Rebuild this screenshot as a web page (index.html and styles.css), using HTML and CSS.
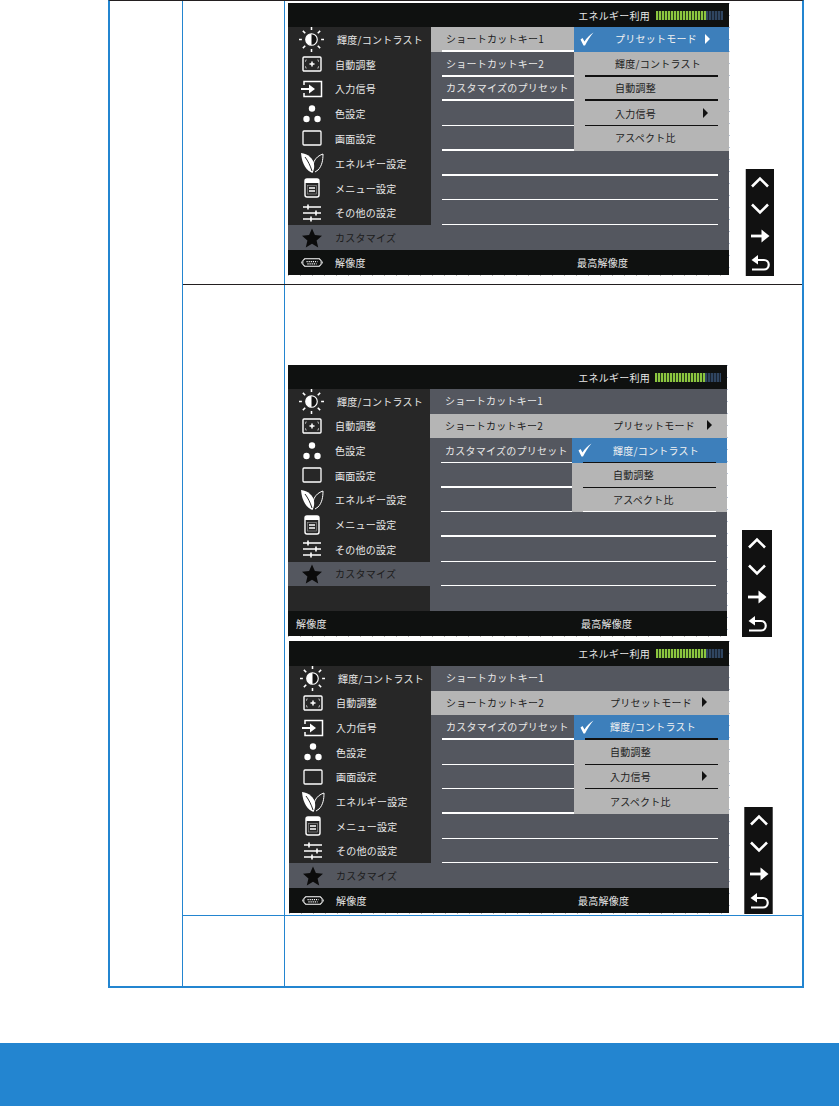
FILE: index.html
```html
<!DOCTYPE html>
<html lang="ja">
<head>
  <meta charset="UTF-8">
  <meta name="viewport" content="width=device-width, initial-scale=1.0">
  <title>カスタマイズ</title>
  <link rel="stylesheet" href="styles.css">
</head>
<body>
  <!-- shared icons -->
  <svg class="icon-defs" xmlns="http://www.w3.org/2000/svg">
    <symbol id="i-sun" viewBox="0 0 26 26">
      <circle cx="13" cy="13" r="6" fill="#111" stroke="#fff" stroke-width="1.2"/>
      <path d="M13 7a6 6 0 0 0 0 12z" fill="#fff"/>
      <path d="M13 0v3M13 23v3M0 13h3M23 13h3M4 4l2.5 2.5M22 4l-2.5 2.5M4 22l2.5-2.5M22 22l-2.5-2.5" stroke="#fff" stroke-width="1.6" fill="none"/>
    </symbol>
    <symbol id="i-auto" viewBox="0 0 24 24">
      <rect x="3" y="5" width="18" height="14" fill="none" stroke="#fff" stroke-width="1.4" rx="1"/>
      <path d="M7 8h-1.500v2M17 8h1.500v2M7 16h-1.500v-2M17 16h1.500v-2" fill="none" stroke="#aaa" stroke-width=".8"/>
      <path d="M12 9.500v5M9.500 12h5" stroke="#fff" stroke-width="1.500"/>
    </symbol>
    <symbol id="i-input" viewBox="0 0 24 24">
      <path d="M4 8V4.500h17.500v15H4V16" fill="none" stroke="#fff" stroke-width="1.500"/>
      <path d="M1 12h9" stroke="#fff" stroke-width="2"/>
      <path d="M9 7.500l6 4.500-6 4.500z" fill="#fff"/>
    </symbol>
    <symbol id="i-color" viewBox="0 0 24 24">
      <circle cx="12" cy="6.500" r="3.200" fill="#fff"/>
      <circle cx="6.500" cy="17" r="3.200" fill="#fff"/>
      <circle cx="17.500" cy="17" r="3.200" fill="#fff"/>
    </symbol>
    <symbol id="i-screen" viewBox="0 0 24 24">
      <rect x="3" y="5" width="18" height="14" rx="1" fill="none" stroke="#fff" stroke-width="1.300"/>
    </symbol>
    <symbol id="i-leaf" viewBox="0 0 24 24">
      <path d="M1 2c7 1 12 5 13 11 .5 3 0 6-1.500 9C7 20 2 14 1 2z" fill="#fff"/>
      <path d="M13 14C14 9 17 5 23 3c0 6-1 12-5 16l-3 2" fill="none" stroke="#fff" stroke-width="1"/>
      <path d="M5 6c3 4 5 8 7 14" fill="none" stroke="#272727" stroke-width="1"/>
    </symbol>
    <symbol id="i-menu" viewBox="0 0 24 24">
      <rect x="5" y="3" width="14" height="18" rx="2" fill="#272727" stroke="#fff" stroke-width="1.400"/>
      <path d="M5 5a2 2 0 0 1 2-2h10a2 2 0 0 1 2 2v2H5z" fill="#fff"/>
      <rect x="7.500" y="9.500" width="9" height="8.500" fill="none" stroke="#999" stroke-width=".6"/>
      <path d="M9 12h6M9 15h6" stroke="#fff" stroke-width="1.400"/>
    </symbol>
    <symbol id="i-other" viewBox="0 0 24 24">
      <path d="M3 6h18M3 12h18M3 18h18" stroke="#fff" stroke-width="1.400"/>
      <path d="M8 3.500v5M16 9.500v5M11 15.500v5" stroke="#fff" stroke-width="1.600"/>
    </symbol>
    <symbol id="i-star" viewBox="0 0 24 24">
      <path d="M12 2.500l2.900 6.600 7.100.7-5.400 4.700 1.600 7-6.200-3.700-6.200 3.700 1.600-7L2 9.800l7.100-.7z" fill="#0b0b0b"/>
    </symbol>
    <symbol id="i-vga" viewBox="0 0 24 12">
      <path d="M4 2h16l2 2v4l-2 2H4L2 8V4z" fill="none" stroke="#fff" stroke-width="1.100"/>
      <path d="M0 5v2M24 5v2" stroke="#fff" stroke-width="1.500"/>
      <path d="M6 5h12M7 7.500h10" stroke="#fff" stroke-width="1.200" stroke-dasharray="1.300 1"/>
    </symbol>
    <symbol id="i-check" viewBox="0 0 14 14">
      <path d="M.5 7.500l2-1.500 2 3.500C6.500 6 9.500 3 13.500.5 10 4.500 7.500 8.500 5 13.500H3.500z" fill="#fff"/>
    </symbol>
    <symbol id="i-up" viewBox="0 0 20 20">
      <path d="M2 14.500l8-8 8 8" fill="none" stroke="#fff" stroke-width="2.600"/>
    </symbol>
    <symbol id="i-down" viewBox="0 0 20 20">
      <path d="M2 5.500l8 8 8-8" fill="none" stroke="#fff" stroke-width="2.600"/>
    </symbol>
    <symbol id="i-right" viewBox="0 0 20 20">
      <path d="M1 10h14" stroke="#fff" stroke-width="2.800"/>
      <path d="M11.500 3.500l8 6.500-8 6.500z" fill="#fff"/>
    </symbol>
    <symbol id="i-back" viewBox="0 0 20 20">
      <path d="M3 7h11a4.500 4.500 0 0 1 0 9.500H2" fill="none" stroke="#fff" stroke-width="2.200"/>
      <path d="M8 2L1.500 7 8 11.500z" fill="#fff"/>
    </symbol>
  </svg>

  <div class="spec-table">
    <div class="spec-side"></div>
    <div class="spec-rows">

      <div class="spec-row row-first">
        <div class="spec-label"></div>
        <div class="spec-body">
          <div class="screen screen-a">
            <div class="osd osd-a">
              <div class="osd-top">
                <span class="osd-text">エネルギー利用</span>
                <span class="energy"><i class="energy-on"></i><i class="energy-off"></i></span>
              </div>
              <div class="osd-main">
                <div class="side">
                  <div class="side-item"><span class="side-icon"><svg class="icon-sun"><use href="#i-sun"/></svg></span><span class="side-text first">輝度/コントラスト</span></div>
                  <div class="side-item"><span class="side-icon"><svg><use href="#i-auto"/></svg></span><span class="side-text">自動調整</span></div>
                  <div class="side-item"><span class="side-icon"><svg><use href="#i-input"/></svg></span><span class="side-text">入力信号</span></div>
                  <div class="side-item"><span class="side-icon"><svg><use href="#i-color"/></svg></span><span class="side-text">色設定</span></div>
                  <div class="side-item"><span class="side-icon"><svg><use href="#i-screen"/></svg></span><span class="side-text">画面設定</span></div>
                  <div class="side-item"><span class="side-icon"><svg><use href="#i-leaf"/></svg></span><span class="side-text">エネルギー設定</span></div>
                  <div class="side-item"><span class="side-icon"><svg><use href="#i-menu"/></svg></span><span class="side-text">メニュー設定</span></div>
                  <div class="side-item"><span class="side-icon"><svg><use href="#i-other"/></svg></span><span class="side-text">その他の設定</span></div>
                  <div class="side-item active"><span class="side-icon"><svg><use href="#i-star"/></svg></span><span class="side-text">カスタマイズ</span></div>
                </div>
                <div class="menu">
                  <div class="menu-row">
                    <div class="sub on"><span class="sub-in line thick">ショートカットキー1</span></div>
                    <div class="opt sel"><span class="opt-in"><svg class="check"><use href="#i-check"/></svg>プリセットモード<span class="arrow arrow-sel"></span></span></div>
                  </div>
                  <div class="menu-row">
                    <div class="sub"><span class="sub-in line thick">ショートカットキー2</span></div>
                    <div class="opt grey"><span class="opt-in pad dark thick">輝度/コントラスト</span></div>
                  </div>
                  <div class="menu-row">
                    <div class="sub"><span class="sub-in line thick">カスタマイズのプリセット</span></div>
                    <div class="opt grey"><span class="opt-in pad dark thick">自動調整</span></div>
                  </div>
                  <div class="menu-row">
                    <div class="sub"><span class="sub-in line"></span></div>
                    <div class="opt grey"><span class="opt-in pad dark">入力信号<span class="arrow"></span></span></div>
                  </div>
                  <div class="menu-row">
                    <div class="sub"><span class="sub-in line thick"></span></div>
                    <div class="opt grey"><span class="opt-in pad">アスペクト比</span></div>
                  </div>
                  <div class="menu-row">
                    <div class="sub"><span class="sub-in line thick"></span></div>
                    <div class="opt full"><span class="opt-in line thick"></span></div>
                  </div>
                  <div class="menu-row">
                    <div class="sub"><span class="sub-in line"></span></div>
                    <div class="opt full"><span class="opt-in line"></span></div>
                  </div>
                  <div class="menu-row">
                    <div class="sub"><span class="sub-in line"></span></div>
                    <div class="opt full"><span class="opt-in line"></span></div>
                  </div>
                  <div class="menu-row"></div>
                </div>
              </div>
              <div class="osd-foot">
                <span class="foot-left"><span class="side-icon"><svg class="icon-vga"><use href="#i-vga"/></svg></span>解像度</span>
                <span>最高解像度</span>
              </div>
            </div>
            <div class="nav-keys">
              <svg><use href="#i-up"/></svg>
              <svg><use href="#i-down"/></svg>
              <svg><use href="#i-right"/></svg>
              <svg><use href="#i-back"/></svg>
            </div>
          </div>
        </div>
      </div>

      <div class="spec-row row-second">
        <div class="spec-label"></div>
        <div class="spec-body">
          <div class="screen screen-b">
            <div class="osd osd-b">
              <div class="osd-top">
                <span class="osd-text">エネルギー利用</span>
                <span class="energy"><i class="energy-on"></i><i class="energy-off"></i></span>
              </div>
              <div class="osd-main">
                <div class="side">
                  <div class="side-item"><span class="side-icon"><svg class="icon-sun"><use href="#i-sun"/></svg></span><span class="side-text first">輝度/コントラスト</span></div>
                  <div class="side-item"><span class="side-icon"><svg><use href="#i-auto"/></svg></span><span class="side-text">自動調整</span></div>
                  <div class="side-item"><span class="side-icon"><svg><use href="#i-color"/></svg></span><span class="side-text">色設定</span></div>
                  <div class="side-item"><span class="side-icon"><svg><use href="#i-screen"/></svg></span><span class="side-text">画面設定</span></div>
                  <div class="side-item"><span class="side-icon"><svg><use href="#i-leaf"/></svg></span><span class="side-text">エネルギー設定</span></div>
                  <div class="side-item"><span class="side-icon"><svg><use href="#i-menu"/></svg></span><span class="side-text">メニュー設定</span></div>
                  <div class="side-item"><span class="side-icon"><svg><use href="#i-other"/></svg></span><span class="side-text">その他の設定</span></div>
                  <div class="side-item active"><span class="side-icon"><svg><use href="#i-star"/></svg></span><span class="side-text">カスタマイズ</span></div>
                </div>
                <div class="menu">
                  <div class="menu-row">
                    <div class="sub"><span class="sub-in">ショートカットキー1</span></div>
                    <div class="opt"></div>
                  </div>
                  <div class="menu-row">
                    <div class="sub on"><span class="sub-in">ショートカットキー2</span></div>
                    <div class="opt grey"><span class="opt-in pad">プリセットモード<span class="arrow"></span></span></div>
                  </div>
                  <div class="menu-row">
                    <div class="sub"><span class="sub-in line">カスタマイズのプリセット</span></div>
                    <div class="opt sel"><span class="opt-in dark"><svg class="check"><use href="#i-check"/></svg>輝度/コントラスト</span></div>
                  </div>
                  <div class="menu-row">
                    <div class="sub"><span class="sub-in line thick"></span></div>
                    <div class="opt grey"><span class="opt-in pad dark">自動調整</span></div>
                  </div>
                  <div class="menu-row">
                    <div class="sub"><span class="sub-in line"></span></div>
                    <div class="opt grey"><span class="opt-in pad line">アスペクト比</span></div>
                  </div>
                  <div class="menu-row">
                    <div class="sub"><span class="sub-in line thick"></span></div>
                    <div class="opt full"><span class="opt-in line thick"></span></div>
                  </div>
                  <div class="menu-row">
                    <div class="sub"><span class="sub-in line"></span></div>
                    <div class="opt full"><span class="opt-in line"></span></div>
                  </div>
                  <div class="menu-row">
                    <div class="sub"><span class="sub-in line"></span></div>
                    <div class="opt full"><span class="opt-in line"></span></div>
                  </div>
                  <div class="menu-row"></div>
                </div>
              </div>
              <div class="osd-foot">
                <span class="foot-left">解像度</span>
                <span>最高解像度</span>
              </div>
            </div>
            <div class="nav-keys">
              <svg><use href="#i-up"/></svg>
              <svg><use href="#i-down"/></svg>
              <svg><use href="#i-right"/></svg>
              <svg><use href="#i-back"/></svg>
            </div>
          </div>

          <div class="screen screen-c">
            <div class="osd osd-c">
              <div class="osd-top">
                <span class="osd-text">エネルギー利用</span>
                <span class="energy"><i class="energy-on"></i><i class="energy-off"></i></span>
              </div>
              <div class="osd-main">
                <div class="side">
                  <div class="side-item"><span class="side-icon"><svg class="icon-sun"><use href="#i-sun"/></svg></span><span class="side-text first">輝度/コントラスト</span></div>
                  <div class="side-item"><span class="side-icon"><svg><use href="#i-auto"/></svg></span><span class="side-text">自動調整</span></div>
                  <div class="side-item"><span class="side-icon"><svg><use href="#i-input"/></svg></span><span class="side-text">入力信号</span></div>
                  <div class="side-item"><span class="side-icon"><svg><use href="#i-color"/></svg></span><span class="side-text">色設定</span></div>
                  <div class="side-item"><span class="side-icon"><svg><use href="#i-screen"/></svg></span><span class="side-text">画面設定</span></div>
                  <div class="side-item"><span class="side-icon"><svg><use href="#i-leaf"/></svg></span><span class="side-text">エネルギー設定</span></div>
                  <div class="side-item"><span class="side-icon"><svg><use href="#i-menu"/></svg></span><span class="side-text">メニュー設定</span></div>
                  <div class="side-item"><span class="side-icon"><svg><use href="#i-other"/></svg></span><span class="side-text">その他の設定</span></div>
                  <div class="side-item active"><span class="side-icon"><svg><use href="#i-star"/></svg></span><span class="side-text">カスタマイズ</span></div>
                </div>
                <div class="menu">
                  <div class="menu-row">
                    <div class="sub"><span class="sub-in">ショートカットキー1</span></div>
                    <div class="opt"></div>
                  </div>
                  <div class="menu-row">
                    <div class="sub on"><span class="sub-in">ショートカットキー2</span></div>
                    <div class="opt grey"><span class="opt-in pad">プリセットモード<span class="arrow"></span></span></div>
                  </div>
                  <div class="menu-row">
                    <div class="sub"><span class="sub-in line thick">カスタマイズのプリセット</span></div>
                    <div class="opt sel"><span class="opt-in dark thick"><svg class="check"><use href="#i-check"/></svg>輝度/コントラスト</span></div>
                  </div>
                  <div class="menu-row">
                    <div class="sub"><span class="sub-in line"></span></div>
                    <div class="opt grey"><span class="opt-in pad dark">自動調整</span></div>
                  </div>
                  <div class="menu-row">
                    <div class="sub"><span class="sub-in line"></span></div>
                    <div class="opt grey"><span class="opt-in pad dark">入力信号<span class="arrow"></span></span></div>
                  </div>
                  <div class="menu-row">
                    <div class="sub"><span class="sub-in line thick"></span></div>
                    <div class="opt grey"><span class="opt-in pad">アスペクト比</span></div>
                  </div>
                  <div class="menu-row">
                    <div class="sub"><span class="sub-in line"></span></div>
                    <div class="opt full"><span class="opt-in line"></span></div>
                  </div>
                  <div class="menu-row">
                    <div class="sub"><span class="sub-in line"></span></div>
                    <div class="opt full"><span class="opt-in line"></span></div>
                  </div>
                  <div class="menu-row"></div>
                </div>
              </div>
              <div class="osd-foot">
                <span class="foot-left"><span class="side-icon"><svg class="icon-vga"><use href="#i-vga"/></svg></span>解像度</span>
                <span>最高解像度</span>
              </div>
            </div>
            <div class="nav-keys">
              <svg><use href="#i-up"/></svg>
              <svg><use href="#i-down"/></svg>
              <svg><use href="#i-right"/></svg>
              <svg><use href="#i-back"/></svg>
            </div>
          </div>
        </div>
      </div>

      <div class="spec-row row-third">
        <div class="spec-label"></div>
        <div class="spec-body"></div>
      </div>

    </div>
  </div>

  <div class="page-footer"></div>
</body>
</html>
```

FILE: styles.css
```css
/* General Reset */
* {
  margin: 0;
  padding: 0;
  box-sizing: border-box;
}
body {
  font-family: "Noto Sans CJK JP", "Noto Sans", sans-serif;
  background-color: #fff;
}
.icon-defs {
  display: none;
}

/* Table frame */
.spec-table {
  display: flex;
  width: 696px;
  margin-left: 108px;
  border-top: 1px solid #231f20;
  border-left: 2px solid #2385d0;
  border-right: 2px solid #2385d0;
  border-bottom: 2px solid #2385d0;
}
.spec-side {
  width: 73px;
  border-right: 1px solid #2385d0;
}
.spec-rows {
  flex: 1;
  min-width: 0;
}
.spec-row {
  display: flex;
}
.spec-label {
  width: 102px;
  flex-shrink: 0;
  border-right: 1px solid #2385d0;
}
.spec-body {
  flex: 1;
  min-width: 0;
}
.row-first {
  height: 284px;
  border-bottom: 1px solid #231f20;
}
.row-first .spec-body {
  padding-top: 2px;
}
.row-second {
  height: 631px;
  border-bottom: 1px solid #2385d0;
}
.row-second .spec-body {
  padding-top: 80px;
}
.row-third {
  height: 70px;
}

/* One monitor menu with its keys */
.screen {
  display: flex;
  align-items: flex-end;
  padding-left: 3px;
}
.screen-c {
  margin-top: 5px;
  padding-left: 4px;
}
.osd {
  position: relative;
  display: flex;
  flex-direction: column;
  flex-shrink: 0;
  width: 441px;
  height: 272px;
  background-color: #54575f;
  color: #e8e8e8;
  font-size: 10px;
  letter-spacing: 0.25px;
  --side-w: 143px;
  --sub-w: 143px;
  --top-h: 24px;
  --opt-pad: 30px;
  --arrow-gap: 10px;
}
.osd-b {
  width: 439px;
  height: 271px;
  --side-w: 142px;
  --sub-w: 142px;
  --arrow-gap: 4px;
}
.osd-c {
  width: 440px;
  --side-w: 142px;
  --top-h: 25px;
  --opt-pad: 25px;
  --arrow-gap: 11px;
}
/* the small ticks along the edge of the screen capture */
.osd::before,
.osd::after {
  content: "";
  position: absolute;
}
.osd::before {
  top: 0;
  right: -1px;
  bottom: 0;
  width: 1px;
  background: repeating-linear-gradient(180deg, #b9c3d6 0 1px, transparent 1px 12px);
}
.osd::after {
  left: 0;
  right: 0;
  bottom: -1px;
  height: 1px;
  background: repeating-linear-gradient(90deg, #b9b9b9 0 1px, transparent 1px 12px);
}
.osd-top {
  display: flex;
  align-items: center;
  justify-content: flex-end;
  height: var(--top-h);
  padding-right: 6px;
  background-color: #0f1110;
}
.osd-text {
  margin-right: 6px;
}
.osd-b .osd-text {
  margin-right: 5px;
}
.energy {
  display: flex;
  height: 9px;
}
.energy-on {
  width: 50px;
  background: repeating-linear-gradient(90deg, #8cc63f 0 2px, #263a1c 2px 3px);
}
.energy-off {
  width: 17px;
  background: repeating-linear-gradient(90deg, #2f4560 0 2px, #1a2330 2px 3px);
}
.osd-b .energy-off {
  width: 16px;
}
.osd-main {
  flex: 1;
  display: flex;
  min-height: 0;
}
.side {
  display: grid;
  grid-template-rows: repeat(9, 1fr);
  flex-shrink: 0;
  width: var(--side-w);
  background-color: #272727;
}
.side-item {
  display: flex;
  align-items: center;
  min-height: 0;
}
.side-item.active {
  background-color: #54575f;
  color: #1c1c1c;
}
.side-icon {
  display: flex;
  align-items: center;
  justify-content: center;
  width: 47px;
  flex-shrink: 0;
}
.side-icon svg {
  width: 24px;
  height: 24px;
}
.side-icon .icon-sun {
  width: 25px;
  height: 25px;
}
.side-icon .icon-vga {
  width: 22px;
  height: 11px;
}
.side-text.first {
  margin-left: 2px;
}

/* Sub menu rows */
.menu {
  flex: 1;
  display: grid;
  grid-template-rows: repeat(9, 1fr);
  min-width: 0;
}
.menu-row {
  display: flex;
  min-height: 0;
}
.sub {
  width: var(--sub-w);
  flex-shrink: 0;
  padding-left: 11px;
}
.sub.on {
  background-color: #b5b5b5;
  color: #1c1c1c;
}
.sub-in {
  display: flex;
  align-items: center;
  height: 100%;
  padding-left: 4px;
  white-space: nowrap;
  border-bottom: 1px solid transparent;
}
.sub-in.line {
  border-bottom-color: #fff;
}
.opt {
  flex: 1;
  padding: 0 11px;
}
.opt.full {
  padding-left: 0;
}
.opt.grey {
  background-color: #b5b5b5;
  color: #1c1c1c;
}
.opt.sel {
  background-color: #3d7fbb;
  color: #f2f2f2;
}
.opt-in {
  display: flex;
  align-items: center;
  height: 100%;
  border-bottom: 1px solid transparent;
}
.opt-in.pad {
  padding-left: var(--opt-pad);
}
.opt-in.dark {
  border-bottom-color: #111;
}
.opt-in.line {
  border-bottom-color: #fff;
}
.sub-in.thick,
.opt-in.thick {
  border-bottom-width: 2px;
}
.check {
  width: 14px;
  height: 14px;
  margin-left: -5px;
  margin-right: calc(var(--opt-pad) - 9px);
}
.arrow {
  width: 0;
  height: 0;
  margin-left: auto;
  margin-right: var(--arrow-gap);
  border-left: 5px solid #111;
  border-top: 5px solid transparent;
  border-bottom: 5px solid transparent;
}
.arrow-sel {
  margin-right: 8px;
  border-left-color: #fff;
}
.osd-foot {
  display: flex;
  align-items: center;
  height: 25px;
  background-color: #0f1110;
}
.foot-left {
  display: flex;
  align-items: center;
  width: 289px;
}
.osd-b .foot-left {
  width: 293px;
  padding-left: 8px;
}

/* Front panel keys */
.nav-keys {
  display: flex;
  flex-direction: column;
  justify-content: space-around;
  align-items: center;
  flex-shrink: 0;
  width: 29px;
  height: 107px;
  margin-left: 16px;
  margin-bottom: -1px;
  background-color: #111;
}
.screen-a .nav-keys {
  border-left: 1px solid #c4c4c4;
}
.screen-b .nav-keys,
.screen-c .nav-keys {
  margin-left: 15px;
}
.screen-b .nav-keys {
  width: 30px;
}
.screen-c .nav-keys {
  border-left: 1px solid #555;
  border-right: 1px solid #555;
}
.nav-keys svg {
  width: 20px;
  height: 20px;
}

.page-footer {
  height: 63px;
  margin-top: 55px;
  background-color: #2385d0;
}
```
